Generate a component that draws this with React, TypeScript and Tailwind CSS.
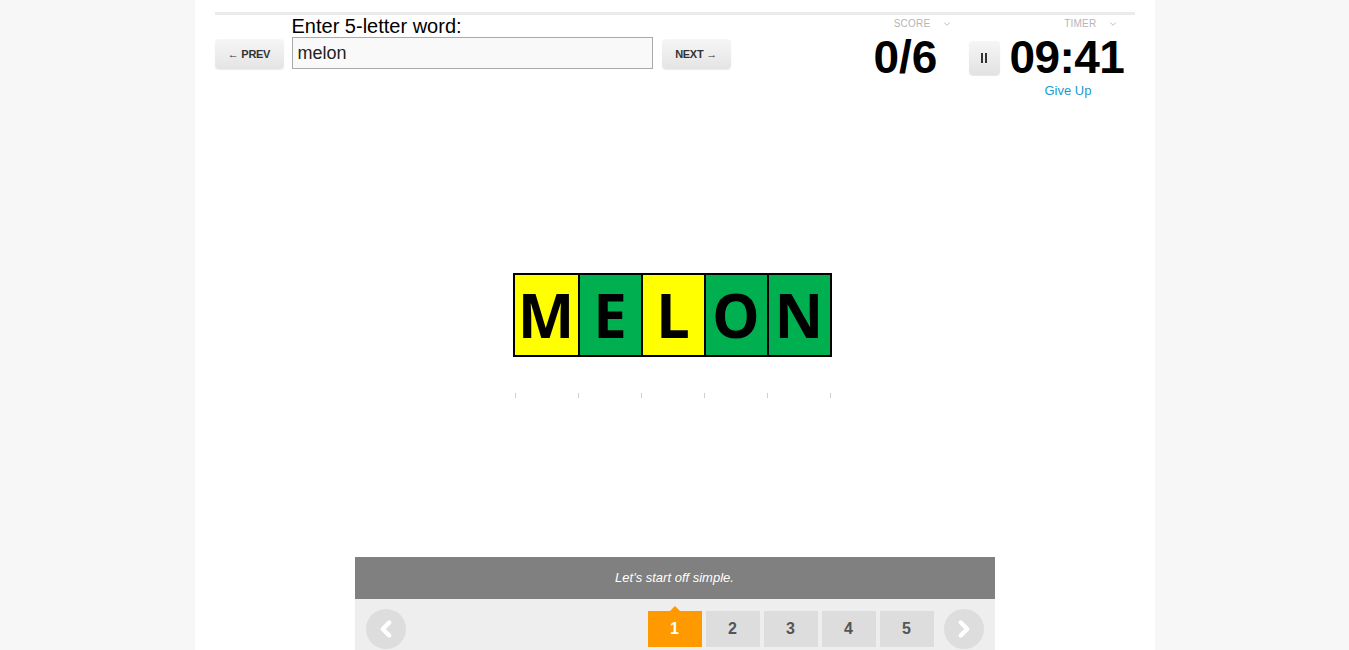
import { ChevronDown, ChevronLeft, ChevronRight } from 'lucide-react'

const tiles = [
  { letter: 'M', color: 'bg-[#ffff00]' },
  { letter: 'E', color: 'bg-[#00b050]' },
  { letter: 'L', color: 'bg-[#ffff00]' },
  { letter: 'O', color: 'bg-[#00b050]' },
  { letter: 'N', color: 'bg-[#00b050]' },
]

const pages = [1, 2, 3, 4, 5]

export default function App() {
  return (
    <div className="h-[650px] overflow-hidden bg-[#f7f7f7] font-['Liberation_Sans',Arial,sans-serif]">
      <div className="mx-auto w-[960px] h-full bg-white px-5 pt-3">
        {/* top rule */}
        <div className="h-[3px] bg-[#ebebeb]" />

        {/* Header */}
        <div className="flex items-start justify-between">
          <div className="flex items-end gap-2">
            <button className="w-[69px] h-[30px] rounded-sm bg-gradient-to-b from-[#f6f6f6] to-[#e4e4e4] shadow-[0_1px_1px_rgba(0,0,0,0.08)] text-[11px] font-bold text-[#333] tracking-tight">
              ← PREV
            </button>
            <div className="flex flex-col">
              <label className="text-[20px] leading-[22px] text-black">Enter 5-letter word:</label>
              <div className="w-[361px] h-[32px] border border-[#a9a9a9] bg-[#f9f9f9] px-[5px] flex items-center text-[18px] text-[#222]">
                melon
              </div>
            </div>
            <button className="ml-[1px] w-[69px] h-[30px] rounded-sm bg-gradient-to-b from-[#f6f6f6] to-[#e4e4e4] shadow-[0_1px_1px_rgba(0,0,0,0.08)] text-[11px] font-bold text-[#333] tracking-tight">
              NEXT →
            </button>
          </div>

          <div className="flex">
            {/* Score */}
            <div className="w-[92px] flex flex-col">
              <div className="h-[13px] mt-[2px] flex items-center justify-end pr-[3px] text-[10px] text-[#b5b5b5] tracking-wide">
                SCORE
                <ChevronDown size={10} className="ml-[11px] text-[#b5b5b5]" />
              </div>
              <div className="mt-[1px] pl-[11px] text-[46px] leading-[53px] font-bold text-black">0/6</div>
            </div>
            {/* Timer */}
            <div className="w-[166px] ml-[14px] flex flex-col">
              <div className="h-[13px] mt-[2px] flex items-center justify-end pr-[17px] text-[10px] text-[#b5b5b5] tracking-wide">
                TIMER
                <ChevronDown size={10} className="ml-[11px] text-[#b5b5b5]" />
              </div>
              <div className="mt-[1px] flex items-start">
                <button className="mt-[10px] w-[31px] h-[34px] rounded-sm bg-gradient-to-b from-[#f6f6f6] to-[#e2e2e2] shadow-[0_1px_1px_rgba(0,0,0,0.1)] flex items-center justify-center gap-[2px]">
                  <span className="w-[2px] h-[10px] bg-[#333]" />
                  <span className="w-[2px] h-[10px] bg-[#333]" />
                </button>
                <div className="ml-[10px] text-[46px] leading-[53px] font-bold tracking-[-0.6px] text-black">09:41</div>
              </div>
              <a className="ml-[76px] -mt-[3px] text-[13px] text-[#1a9bcf]">Give Up</a>
            </div>
          </div>
        </div>

        {/* Board */}
        <div className="mt-[172px] flex flex-col items-center pr-[5px]">
          <div className="flex border-2 border-black">
            {tiles.map((t, i) => (
              <div
                key={i}
                className={`w-[63px] h-[80px] flex items-center justify-center ${t.color} ${i > 0 ? 'border-l-2 border-black' : ''} font-['Open_Sans',sans-serif] font-bold text-[60px] text-black`}
              >
                {t.letter}
              </div>
            ))}
          </div>
          <div className="mt-[36px] flex border-r border-[#cfcfcf] pl-[1px]">
            {tiles.map((_, i) => (
              <div key={i} className="w-[63px] h-[5px] border-l border-[#cfcfcf]" />
            ))}
          </div>
        </div>

        {/* Footer */}
        <div className="mt-[159px] mx-auto w-[640px]">
          <div className="h-[42px] bg-[#808080] flex items-center justify-center text-[13px] italic text-white">
            Let's start off simple.
          </div>
          <div className="h-[60px] bg-[#eeeeee] flex items-start pt-[12px] px-[11px]">
            <div className="-mt-[2px] w-[40px] h-[40px] rounded-full bg-[#dddddd] flex items-center justify-center">
              <ChevronLeft size={26} strokeWidth={4} className="text-white" />
            </div>
            <div className="flex-1 flex justify-end gap-[4px] pr-[10px]">
              {pages.map((p) => (
                <div
                  key={p}
                  className={`relative w-[54px] h-[36px] flex items-center justify-center text-[16px] font-bold ${
                    p === 1 ? 'bg-[#ff9900] text-white' : 'bg-[#dddddd] text-[#555]'
                  }`}
                >
                  {p === 1 && (
                    <span className="absolute -top-[5px] left-1/2 -translate-x-1/2 w-0 h-0 border-l-[5px] border-r-[5px] border-b-[5px] border-l-transparent border-r-transparent border-b-[#ff9900]" />
                  )}
                  {p}
                </div>
              ))}
            </div>
            <div className="-mt-[2px] w-[40px] h-[40px] rounded-full bg-[#dddddd] flex items-center justify-center">
              <ChevronRight size={26} strokeWidth={4} className="text-white" />
            </div>
          </div>
        </div>
      </div>
    </div>
  )
}
